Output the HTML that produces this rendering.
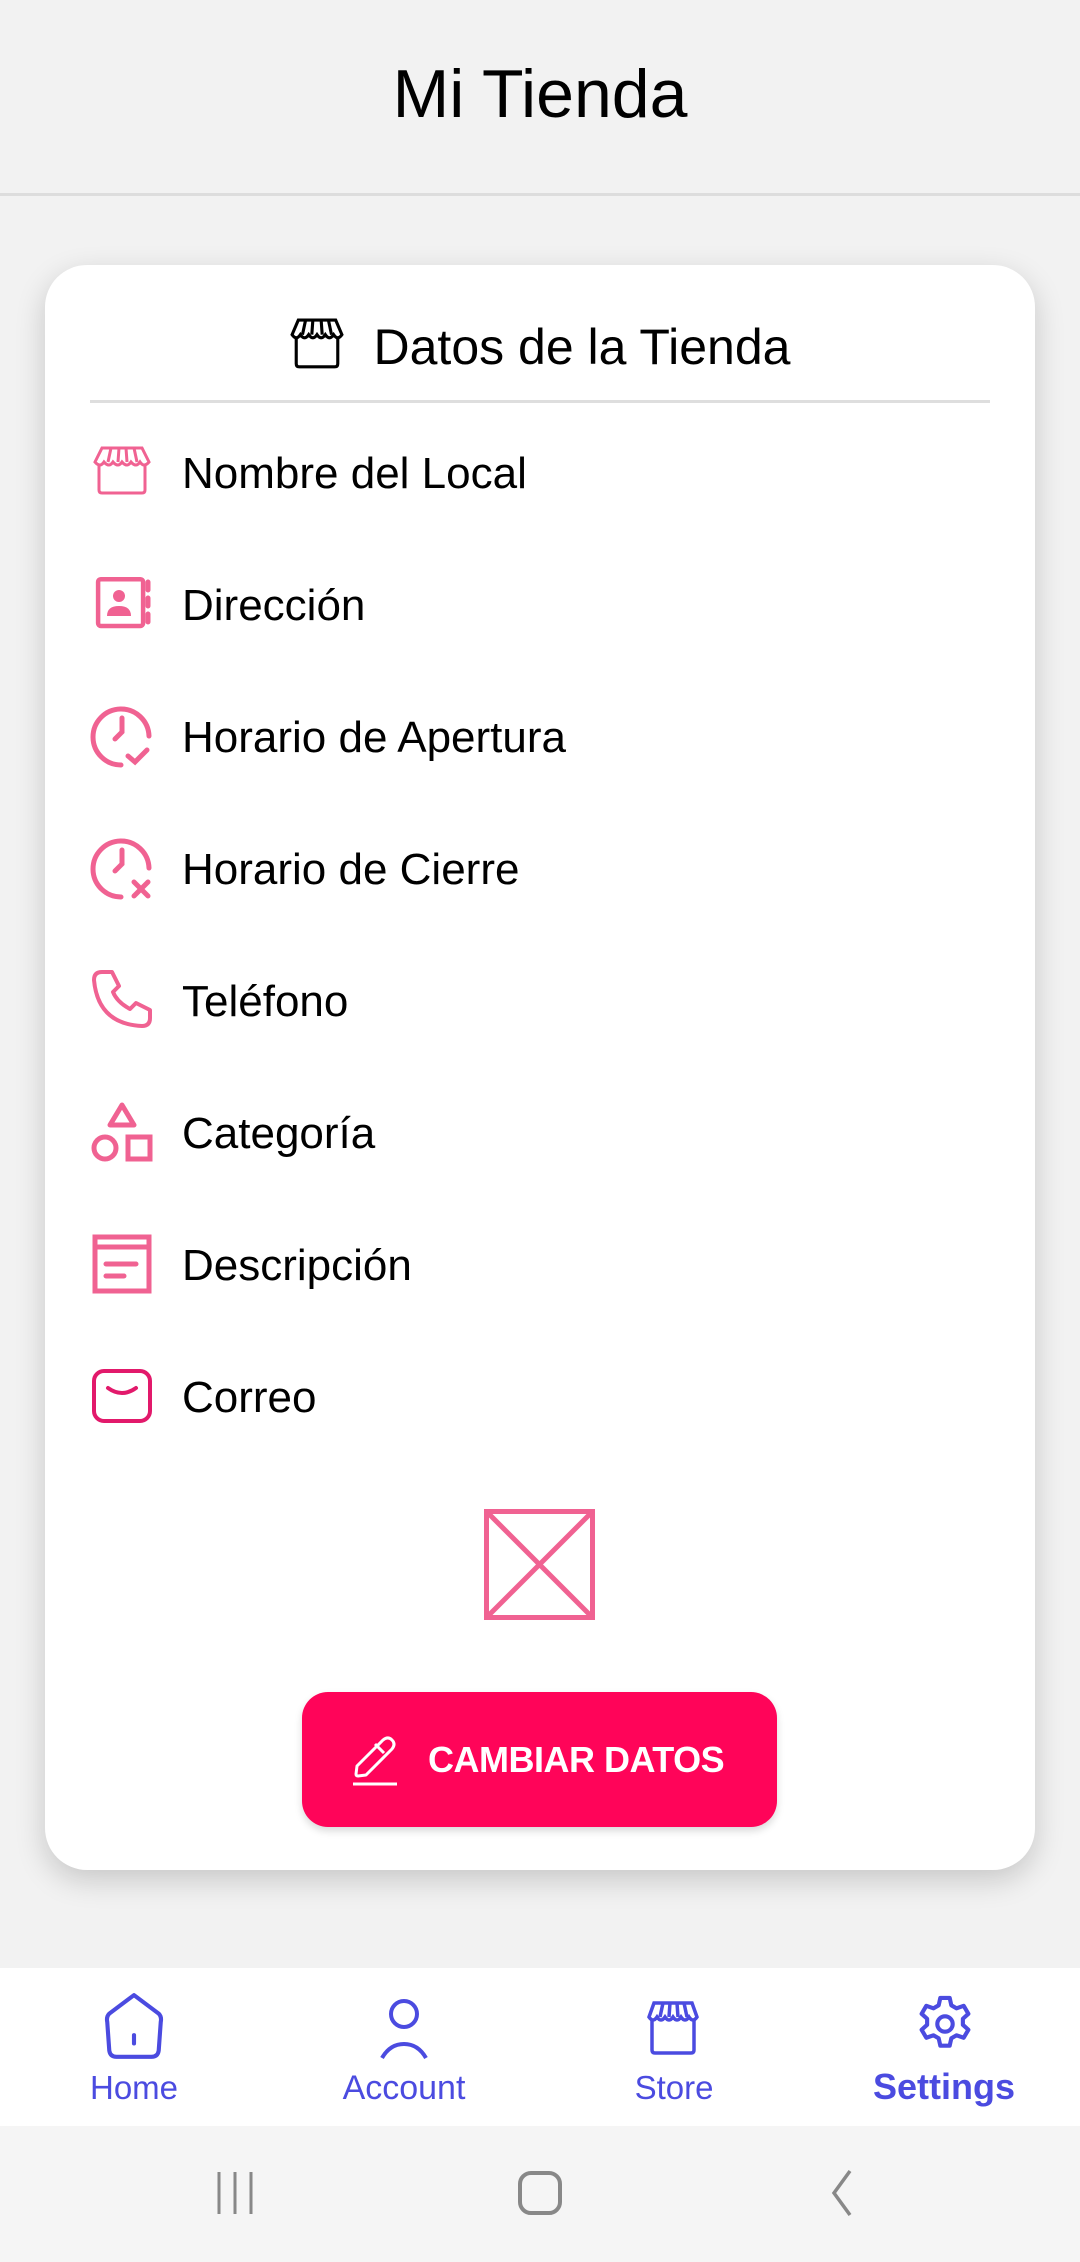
<!DOCTYPE html>
<html><head><meta charset="utf-8"><style>
*{margin:0;padding:0;box-sizing:border-box}
body{width:1080px;height:2262px;background:#f2f2f2;font-family:"Liberation Sans",Roboto,sans-serif;position:relative;overflow:hidden}
.hdr{position:absolute;left:0;top:0;width:1080px;height:196px;background:#f2f2f2;border-bottom:3px solid #dddddd}
.hdr h1{position:absolute;width:100%;top:55px;text-align:center;font-weight:400;font-size:68px;color:#000}
.card{position:absolute;left:45px;top:265px;width:990px;height:1605px;background:#fff;border-radius:42px;box-shadow:0 10px 30px rgba(0,0,0,.18)}
.ch{position:absolute;top:318px;left:0;width:1080px;text-align:center;font-size:50px;color:#000}
.div{position:absolute;left:90px;top:400px;width:900px;height:3px;background:#dedede}
.row{position:absolute;left:182px;font-size:44px;color:#000;line-height:50px}
.ic{position:absolute;left:90px;width:64px;height:64px}
.btn{position:absolute;left:302px;top:1692px;width:475px;height:135px;background:#ff0459;border-radius:26px;box-shadow:0 4px 8px rgba(0,0,0,.15);color:#fff;font-size:37px;font-weight:700}
.nav{position:absolute;left:0;top:1968px;width:1080px;height:158px;background:#fff}
.nl{position:absolute;top:2069px;font-size:33px;color:#4b4be0;text-align:center;width:260px}
.sys{position:absolute;left:0;top:2126px;width:1080px;height:136px;background:#f5f5f5}
</style></head><body>
<div class="hdr"><h1>Mi Tienda</h1></div>
<div class="card"></div>
<div class="ch"><svg style="vertical-align:-6px;margin-right:30px" width="54" height="52" viewBox="0 0 52 50" fill="none" stroke="#000" stroke-width="3"><path d="M8 2h36l6 14q-4 6-8 0q-4 6-8 0q-4 6-8 0q-4 6-8 0q-4 6-8 0q-4 6-8 0z"/><path d="M6 20v24q0 3 3 3h34q3 0 3-3V20"/><path d="M15 2l-3 14M22 2l-1 14M30 2l1 14M37 2l3 14"/></svg>Datos de la Tienda</div>
<div class="div"></div>

<svg class="ic" style="top:442px" viewBox="0 0 64 64" fill="none" stroke="#f06292" stroke-width="3"><path d="M12 6h40l7 14q-5 6-9 0q-4 6-9 0q-4 6-9 0q-4 6-9 0q-4 6-9 0q-4 6-9 0z"/><path d="M9 24v24q0 3 3 3h40q3 0 3-3V24"/><path d="M21 6l-3 14M29 6l-1 14M36 6l1 14M44 6l3 14"/></svg>
<div class="row" style="top:449px">Nombre del Local</div>

<svg class="ic" style="top:572px" viewBox="0 0 64 64" fill="none" stroke="#f06292" stroke-width="5"><rect x="7" y="5" width="50" height="52" rx="3" transform="scale(.9) translate(2,3)"/><circle cx="29" cy="24" r="6" fill="#f06292" stroke="none"/><path d="M17 44q0-10 12-10q12 0 12 10z" fill="#f06292" stroke="none"/><path d="M58 10v8M58 26v8M58 42v8" stroke-linecap="round"/></svg>
<div class="row" style="top:581px">Dirección</div>

<svg class="ic" style="top:704px" viewBox="0 0 64 64" fill="none" stroke="#f06292" stroke-width="5" stroke-linecap="round"><path d="M31 61A28 28 0 1 1 59 32"/><path d="M32 14v14l-7 7"/><path d="M38 52l7 6l12-12"/></svg>
<div class="row" style="top:713px">Horario de Apertura</div>

<svg class="ic" style="top:836px" viewBox="0 0 64 64" fill="none" stroke="#f06292" stroke-width="5" stroke-linecap="round"><path d="M31 61A28 28 0 1 1 59 32"/><path d="M32 14v14l-7 7"/><path d="M44 46l14 14M58 46L44 60"/></svg>
<div class="row" style="top:845px">Horario de Cierre</div>

<svg class="ic" style="top:968px" viewBox="0 0 64 64" fill="none" stroke="#f06292" stroke-width="4" stroke-linejoin="round"><path d="M14 4l8 0l7 14l-6 6q4 10 17 17l6-6l14 7v8q0 8-8 8Q8 56 4 12q0-8 8-8z"/></svg>
<div class="row" style="top:977px">Teléfono</div>

<svg class="ic" style="top:1100px" viewBox="0 0 64 64" fill="none" stroke="#f06292" stroke-width="5"><path d="M32 5l12 20H20z" stroke-linejoin="round"/><circle cx="15" cy="48" r="11"/><rect x="38" y="37" width="22" height="22"/></svg>
<div class="row" style="top:1109px">Categoría</div>

<svg class="ic" style="top:1232px" viewBox="0 0 64 64" fill="none" stroke="#f06292" stroke-width="5"><rect x="5" y="5" width="54" height="54"/><path d="M5 15h54"/><path d="M16 32h30M16 44h18" stroke-linecap="round"/></svg>
<div class="row" style="top:1241px">Descripción</div>

<svg class="ic" style="top:1365px" viewBox="0 0 64 64" fill="none" stroke="#e2196b" stroke-width="4"><rect x="4" y="6" width="56" height="50" rx="10"/><path d="M18 23q14 10 28 0" stroke-linecap="round"/></svg>
<div class="row" style="top:1373px">Correo</div>

<svg style="position:absolute;left:484px;top:1509px" width="111" height="111" viewBox="0 0 111 111" fill="none" stroke="#f06292" stroke-width="5"><rect x="2.5" y="2.5" width="106" height="106"/><path d="M2.5 2.5l106 106M108.5 2.5l-106 106"/></svg>

<div class="btn"><svg style="position:absolute;left:50px;top:40px" width="48" height="54" viewBox="0 0 48 54" fill="none" stroke="#fff" stroke-width="3" stroke-linejoin="round"><path d="M5 34l26-26q5-4 9 0q4 4 0 9L14 43l-8 1q-2 0-2-2z"/><path d="M23 12l9 9"/><path d="M1 52h44"/></svg><span style="position:absolute;left:126px;top:47px;font-size:36px;letter-spacing:-0.5px">CAMBIAR DATOS</span></div>

<div class="nav"></div>
<svg style="position:absolute;left:100px;top:1992px" width="68" height="70" viewBox="0 0 64 68" fill="none" stroke="#4b4be0" stroke-width="4" stroke-linejoin="round"><path d="M32 3l24 18q3 3 2 8l-2 28q-1 6-7 6H15q-6 0-7-6L6 29q-1-5 2-8z"/><path d="M32 42v8" stroke-linecap="round"/></svg>
<svg style="position:absolute;left:378px;top:1998px" width="52" height="62" viewBox="0 0 52 62" fill="none" stroke="#4b4be0" stroke-width="4"><circle cx="26" cy="16" r="13"/><path d="M4 60q8-14 22-14q14 0 22 14"/></svg>
<svg style="position:absolute;left:646px;top:2000px" width="54" height="56" viewBox="0 0 54 56" fill="none" stroke="#4b4be0" stroke-width="3.5"><path d="M8 3h38l5 14q-4 6-8 0q-4 6-8 0q-4 6-8 0q-4 6-8 0q-4 6-8 0q-4 6-8 0z"/><path d="M6 20v30q0 3 3 3h36q3 0 3-3V20"/><path d="M17 3l-3 14M24 3l-1 14M31 3l1 14M38 3l3 14"/></svg>
<svg style="position:absolute;left:912px;top:1990px" width="66" height="68" viewBox="0 0 24 24" fill="none" stroke="#4b4be0" stroke-width="1.5"><path d="M10.3 2.5h3.4l.6 2.7 1.9 1.1 2.6-.9 1.7 2.9-2 1.8v2.2l2 1.8-1.7 2.9-2.6-.9-1.9 1.1-.6 2.7h-3.4l-.6-2.7-1.9-1.1-2.6.9-1.7-2.9 2-1.8v-2.2l-2-1.8 1.7-2.9 2.6.9 1.9-1.1z" stroke-linejoin="round"/><circle cx="12" cy="12" r="2.8"/></svg>
<div class="nl" style="left:4px">Home</div>
<div class="nl" style="left:274px;font-size:34px">Account</div>
<div class="nl" style="left:544px">Store</div>
<div class="nl" style="left:814px;font-weight:700;font-size:36px;top:2066px">Settings</div>

<div class="sys"></div>
<svg style="position:absolute;left:210px;top:2168px" width="50" height="50" viewBox="0 0 50 50" stroke="#888" stroke-width="3"><path d="M9 4v42M25 4v42M41 4v42"/></svg>
<svg style="position:absolute;left:516px;top:2170px" width="48" height="46" viewBox="0 0 48 46" fill="none" stroke="#888" stroke-width="4"><rect x="4" y="3" width="40" height="40" rx="11"/></svg>
<svg style="position:absolute;left:826px;top:2168px" width="30" height="50" viewBox="0 0 30 50" fill="none" stroke="#888" stroke-width="3.5"><path d="M24 3L8 25l16 22"/></svg>
</body></html>
